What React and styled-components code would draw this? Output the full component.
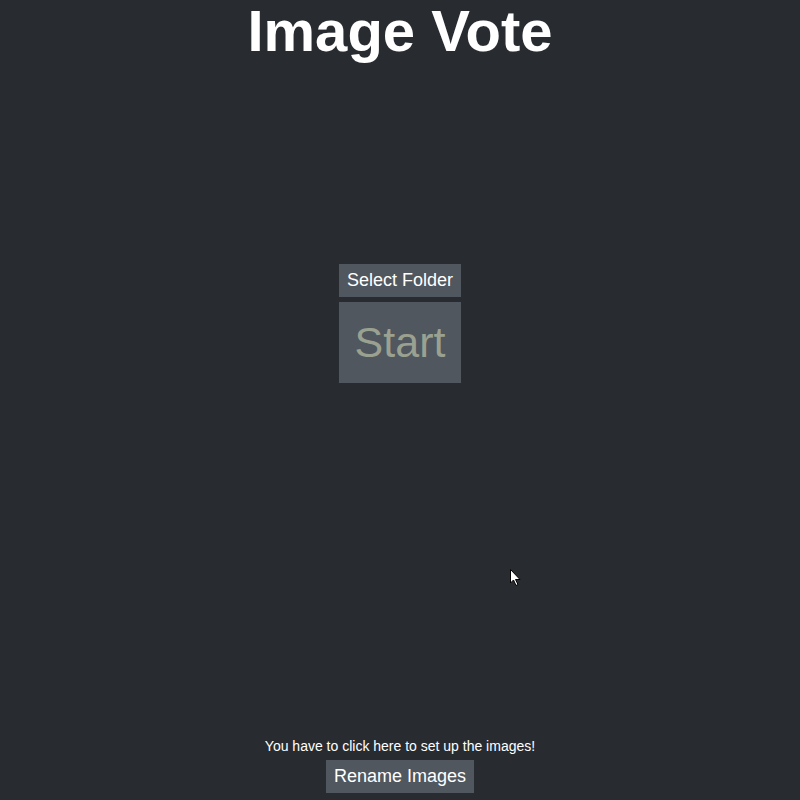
import React from "react";
import styled, { createGlobalStyle } from "styled-components";

const Global = createGlobalStyle`
  html, body {
    margin: 0;
    padding: 0;
    background: #282c31;
  }
  body {
    font-family: "Liberation Sans", Arial, sans-serif;
    color: #fff;
  }
`;

const Page = styled.div`
  position: relative;
  height: 800px;
  display: flex;
  flex-direction: column;
  align-items: center;
`;

const Title = styled.h1`
  margin: 0;
  font-size: 58px;
  font-weight: bold;
  line-height: 62px;
  color: #fff;
`;

const Center = styled.div`
  flex: 1;
  display: flex;
  flex-direction: column;
  align-items: stretch;
  justify-content: center;
  gap: 5px;
  padding-bottom: 154px;
`;

const Button = styled.button`
  border: none;
  background: #50575e;
  color: ${(p) => (p.$muted ? "#9ba190" : "#fff")};
  font-family: "Liberation Sans", Arial, sans-serif;
  font-size: ${(p) => (p.$big ? "43px" : "18px")};
  height: ${(p) => (p.$big ? "81px" : "33px")};
  padding: 0 8px;
  cursor: pointer;
`;

const Footer = styled.div`
  display: flex;
  flex-direction: column;
  align-items: center;
  gap: 6px;
  padding-bottom: 7px;
`;

const Hint = styled.p`
  margin: 0;
  font-size: 14px;
  line-height: 16px;
  color: #fff;
`;

const Cursor = styled.svg`
  position: absolute;
  left: 510px;
  top: 569px;
`;

export default function App() {
  return (
    <>
      <Global />
      <Page>
        <Title>Image Vote</Title>
        <Center>
          <Button>Select Folder</Button>
          <Button $big $muted>Start</Button>
        </Center>
        <Footer>
          <Hint>You have to click here to set up the images!</Hint>
          <Button>Rename Images</Button>
        </Footer>
        <Cursor width="12" height="18" viewBox="0 0 12 18">
          <path d="M0.5 0.5 L0.5 14 L3.5 11 L6 16.5 L8 15.5 L5.5 10.5 L10 10.5 Z" fill="#fff" stroke="#000" strokeWidth="1" />
        </Cursor>
      </Page>
    </>
  );
}
